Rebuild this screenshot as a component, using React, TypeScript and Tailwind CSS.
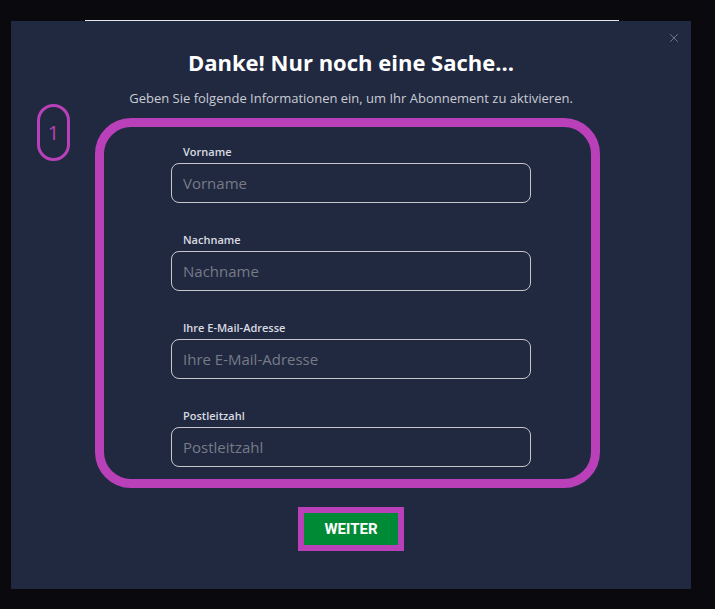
import { X } from "lucide-react";

const fields = [
  { id: "vorname", label: "Vorname" },
  { id: "nachname", label: "Nachname" },
  { id: "email", label: "Ihre E-Mail-Adresse" },
  { id: "plz", label: "Postleitzahl" },
];

export default function App() {
  return (
    <div
      className="h-[609px] w-full overflow-hidden bg-[#0a0a0e]"
      style={{ fontFamily: "'Open Sans', 'Liberation Sans', sans-serif" }}
    >
      {/* strip behind the modal */}
      <div className="ml-[85px] mt-[20px] h-px w-[534px] bg-[#e6e6ea]" />

      <div className="relative ml-[11px] h-[568px] w-[680px] bg-[#212940]">
        <button className="absolute right-[10px] top-[10px] text-[#a9adb8]" aria-label="Schließen">
          <X size={14} strokeWidth={1} />
        </button>

        <h2 className="pt-[27px] text-center text-[22px] font-bold leading-[28px] text-white">
          Danke! Nur noch eine Sache...
        </h2>
        <p className="mt-[13px] text-center text-[13px] leading-[18px] text-[#c9ccd4]">
          Geben Sie folgende Informationen ein, um Ihr Abonnement zu aktivieren.
        </p>

        <div className="absolute left-[26px] top-[83px] flex h-[57px] w-[33px] items-center justify-center rounded-full border-[3px] border-[#b940b9] text-[20px] text-[#b940b9]">
          1
        </div>

        <form className="ml-[84px] mt-[11px] h-[370px] w-[505px] rounded-[36px] border-[9px] border-[#b940b9] pl-[67px] pt-[18px]">
          {fields.map((f, i) => (
            <div key={f.id} className={i > 0 ? "mt-[30px]" : ""}>
              <label
                htmlFor={f.id}
                className="block pl-[12px] text-[11px] font-semibold leading-[14px] text-[#d9dbe1]"
              >
                {f.label}
              </label>
              <input
                id={f.id}
                placeholder={f.label}
                className="mt-[4px] h-[40px] w-[360px] rounded-[8px] border border-[#c5c7cc] bg-transparent px-[11px] text-[15px] text-white outline-none placeholder:text-[#767b88]"
              />
            </div>
          ))}
        </form>

        <div className="mt-[19px] flex justify-center">
          <div className="border-[6px] border-[#b940b9]">
            <button
              type="button"
              className="h-[32px] w-[94px] bg-[#008a35] text-[15px] font-bold text-white"
              style={{ fontFamily: "Roboto, 'Liberation Sans', sans-serif" }}
            >
              WEITER
            </button>
          </div>
        </div>
      </div>
    </div>
  );
}
